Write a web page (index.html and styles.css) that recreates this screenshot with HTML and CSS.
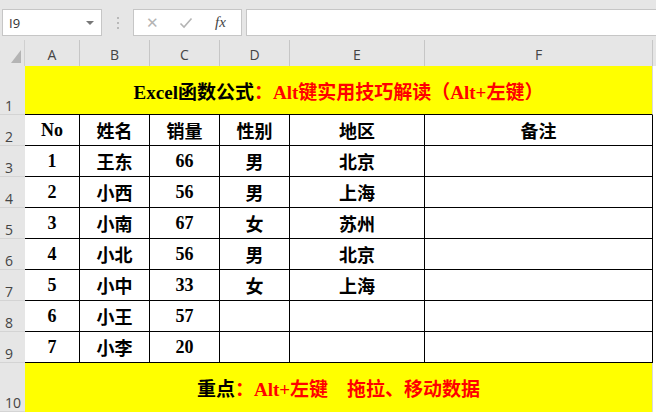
FILE: index.html
```html
<!DOCTYPE html>
<html lang="zh-CN">
<head>
    <meta charset="UTF-8">
    <title>Alt键实用技巧</title>
    <link rel="stylesheet" href="styles.css">
</head>
<body>
    <div class="toolbar">
        <div class="namebox">
            <span>I9</span>
            <span class="arrow"></span>
        </div>
        <div class="dots"><i></i><i></i><i></i></div>
        <div class="fxbox">
            <span class="btn">&#x2715;</span>
            <span class="btn check">
                <svg width="14" height="12" viewBox="0 0 14 12"><path d="M1.5 6.5 L5 10 L12.5 1.5" fill="none" stroke="#b4b4b4" stroke-width="1.6"/></svg>
            </span>
            <span class="fx">fx</span>
        </div>
        <div class="formula"></div>
    </div>

    <div class="sheet">
        <!-- column headers -->
        <div class="corner">
            <svg width="10" height="13" viewBox="0 0 10 13"><polygon points="10,0 10,13 0,13" fill="#b4b4b4"/></svg>
        </div>
        <div class="colhead">A</div>
        <div class="colhead">B</div>
        <div class="colhead">C</div>
        <div class="colhead">D</div>
        <div class="colhead">E</div>
        <div class="colhead">F</div>
        <div class="colhead end"></div>

        <!-- row 1 -->
        <div class="rowhead tall">1</div>
        <div class="banner first">Excel函数公式<span class="red">：Alt键实用技巧解读（Alt+左键）</span></div>
        <div class="gap"></div>

        <!-- row 2 -->
        <div class="rowhead">2</div>
        <div class="cell">No</div>
        <div class="cell">姓名</div>
        <div class="cell">销量</div>
        <div class="cell">性别</div>
        <div class="cell">地区</div>
        <div class="cell">备注</div>
        <div class="gap"></div>

        <div class="rowhead">3</div>
        <div class="cell">1</div>
        <div class="cell">王东</div>
        <div class="cell">66</div>
        <div class="cell">男</div>
        <div class="cell">北京</div>
        <div class="cell"></div>
        <div class="gap"></div>

        <div class="rowhead">4</div>
        <div class="cell">2</div>
        <div class="cell">小西</div>
        <div class="cell">56</div>
        <div class="cell">男</div>
        <div class="cell">上海</div>
        <div class="cell"></div>
        <div class="gap"></div>

        <div class="rowhead">5</div>
        <div class="cell">3</div>
        <div class="cell">小南</div>
        <div class="cell">67</div>
        <div class="cell">女</div>
        <div class="cell">苏州</div>
        <div class="cell"></div>
        <div class="gap"></div>

        <div class="rowhead">6</div>
        <div class="cell">4</div>
        <div class="cell">小北</div>
        <div class="cell">56</div>
        <div class="cell">男</div>
        <div class="cell">北京</div>
        <div class="cell"></div>
        <div class="gap"></div>

        <div class="rowhead">7</div>
        <div class="cell">5</div>
        <div class="cell">小中</div>
        <div class="cell">33</div>
        <div class="cell">女</div>
        <div class="cell">上海</div>
        <div class="cell"></div>
        <div class="gap"></div>

        <div class="rowhead">8</div>
        <div class="cell">6</div>
        <div class="cell">小王</div>
        <div class="cell">57</div>
        <div class="cell"></div>
        <div class="cell"></div>
        <div class="cell"></div>
        <div class="gap"></div>

        <div class="rowhead">9</div>
        <div class="cell">7</div>
        <div class="cell">小李</div>
        <div class="cell">20</div>
        <div class="cell"></div>
        <div class="cell"></div>
        <div class="cell"></div>
        <div class="gap"></div>

        <!-- row 10 -->
        <div class="rowhead tall">10</div>
        <div class="banner">重点<span class="red">：Alt+左键    拖拉、移动数据</span></div>
        <div class="gap"></div>
    </div>
</body>
</html>
```

FILE: styles.css
```css
body {
    margin: 0;
    width: 656px;
    height: 412px;
    overflow: hidden;
    background-color: #e6e6e6;
    font-family: "Liberation Sans", "Noto Sans CJK SC", sans-serif;
}

/* formula bar */
.toolbar {
    height: 40px;
    display: flex;
    align-items: flex-start;
    padding-top: 9px;
    box-sizing: border-box;
}

.namebox, .fxbox, .formula {
    height: 27px;
    background-color: #fff;
    border: 1px solid #c6c6c6;
    box-sizing: border-box;
}

.namebox {
    width: 100px;
    margin-left: 2px;
    display: flex;
    align-items: center;
    justify-content: space-between;
    padding: 0 7px 0 6px;
    font-family: "Open Sans", sans-serif;
    font-size: 13px;
    color: #333;
}

.arrow {
    width: 0;
    height: 0;
    border-left: 4px solid transparent;
    border-right: 4px solid transparent;
    border-top: 4px solid #777;
}

.dots {
    width: 31px;
    display: flex;
    flex-direction: column;
    align-items: center;
    gap: 3px;
    padding-top: 8px;
}

.dots i {
    width: 2px;
    height: 2px;
    background-color: #b9b9b9;
}

.fxbox {
    width: 109px;
    display: flex;
    align-items: center;
    padding-left: 12px;
}

.btn {
    width: 33px;
    color: #b4b4b4;
    font-size: 15px;
}

.check svg {
    display: block;
}

.fx {
    margin-left: 3px;
    font-family: "Liberation Serif", serif;
    font-style: italic;
    font-size: 15px;
    color: #444;
}

.formula {
    flex: 1;
    margin-left: 4px;
    border-right: none;
}

/* worksheet */
.sheet {
    display: grid;
    grid-template-columns: 25px 55px 70px 70px 70px 135px 228px 3px;
    grid-template-rows: 26px 49px repeat(8, 31px) 49px;
}

.corner {
    display: flex;
    align-items: flex-end;
    justify-content: flex-end;
    padding: 0 3px 3px 0;
    border-right: 1px solid #d0d0d0;
}

.colhead {
    display: flex;
    align-items: flex-end;
    justify-content: center;
    padding-bottom: 2px;
    font-family: "Open Sans", sans-serif;
    font-size: 14px;
    color: #444;
    border-right: 1px solid #c6c6c6;
    box-sizing: border-box;
}

.colhead.end {
    border-right: none;
}

.rowhead {
    display: flex;
    align-items: flex-end;
    padding: 0 0 0 5px;
    font-family: "Open Sans", sans-serif;
    font-size: 14px;
    line-height: 16px;
    color: #444;
    border-bottom: 1px solid #d4d4d4;
    box-sizing: border-box;
}

.banner {
    grid-column: 2 / 8;
    background-color: #ffff00;
    display: flex;
    align-items: center;
    justify-content: center;
    font-family: "Liberation Serif", "Noto Sans CJK SC", serif;
    font-weight: bold;
    font-size: 19px;
    color: #000;
    white-space: pre;
    border-right: 1px solid #d8d8d8;
    box-sizing: border-box;
}

.banner.first {
    border-bottom: 1px solid #000;
}

.red {
    color: #ff0000;
}

.cell {
    background-color: #fff;
    display: flex;
    align-items: center;
    justify-content: center;
    font-family: "Liberation Serif", "Noto Sans CJK SC", serif;
    font-weight: bold;
    font-size: 18px;
    color: #000;
    border-right: 1px solid #000;
    border-bottom: 1px solid #000;
    box-sizing: border-box;
}

.gap {
    background-color: #fff;
}
```
